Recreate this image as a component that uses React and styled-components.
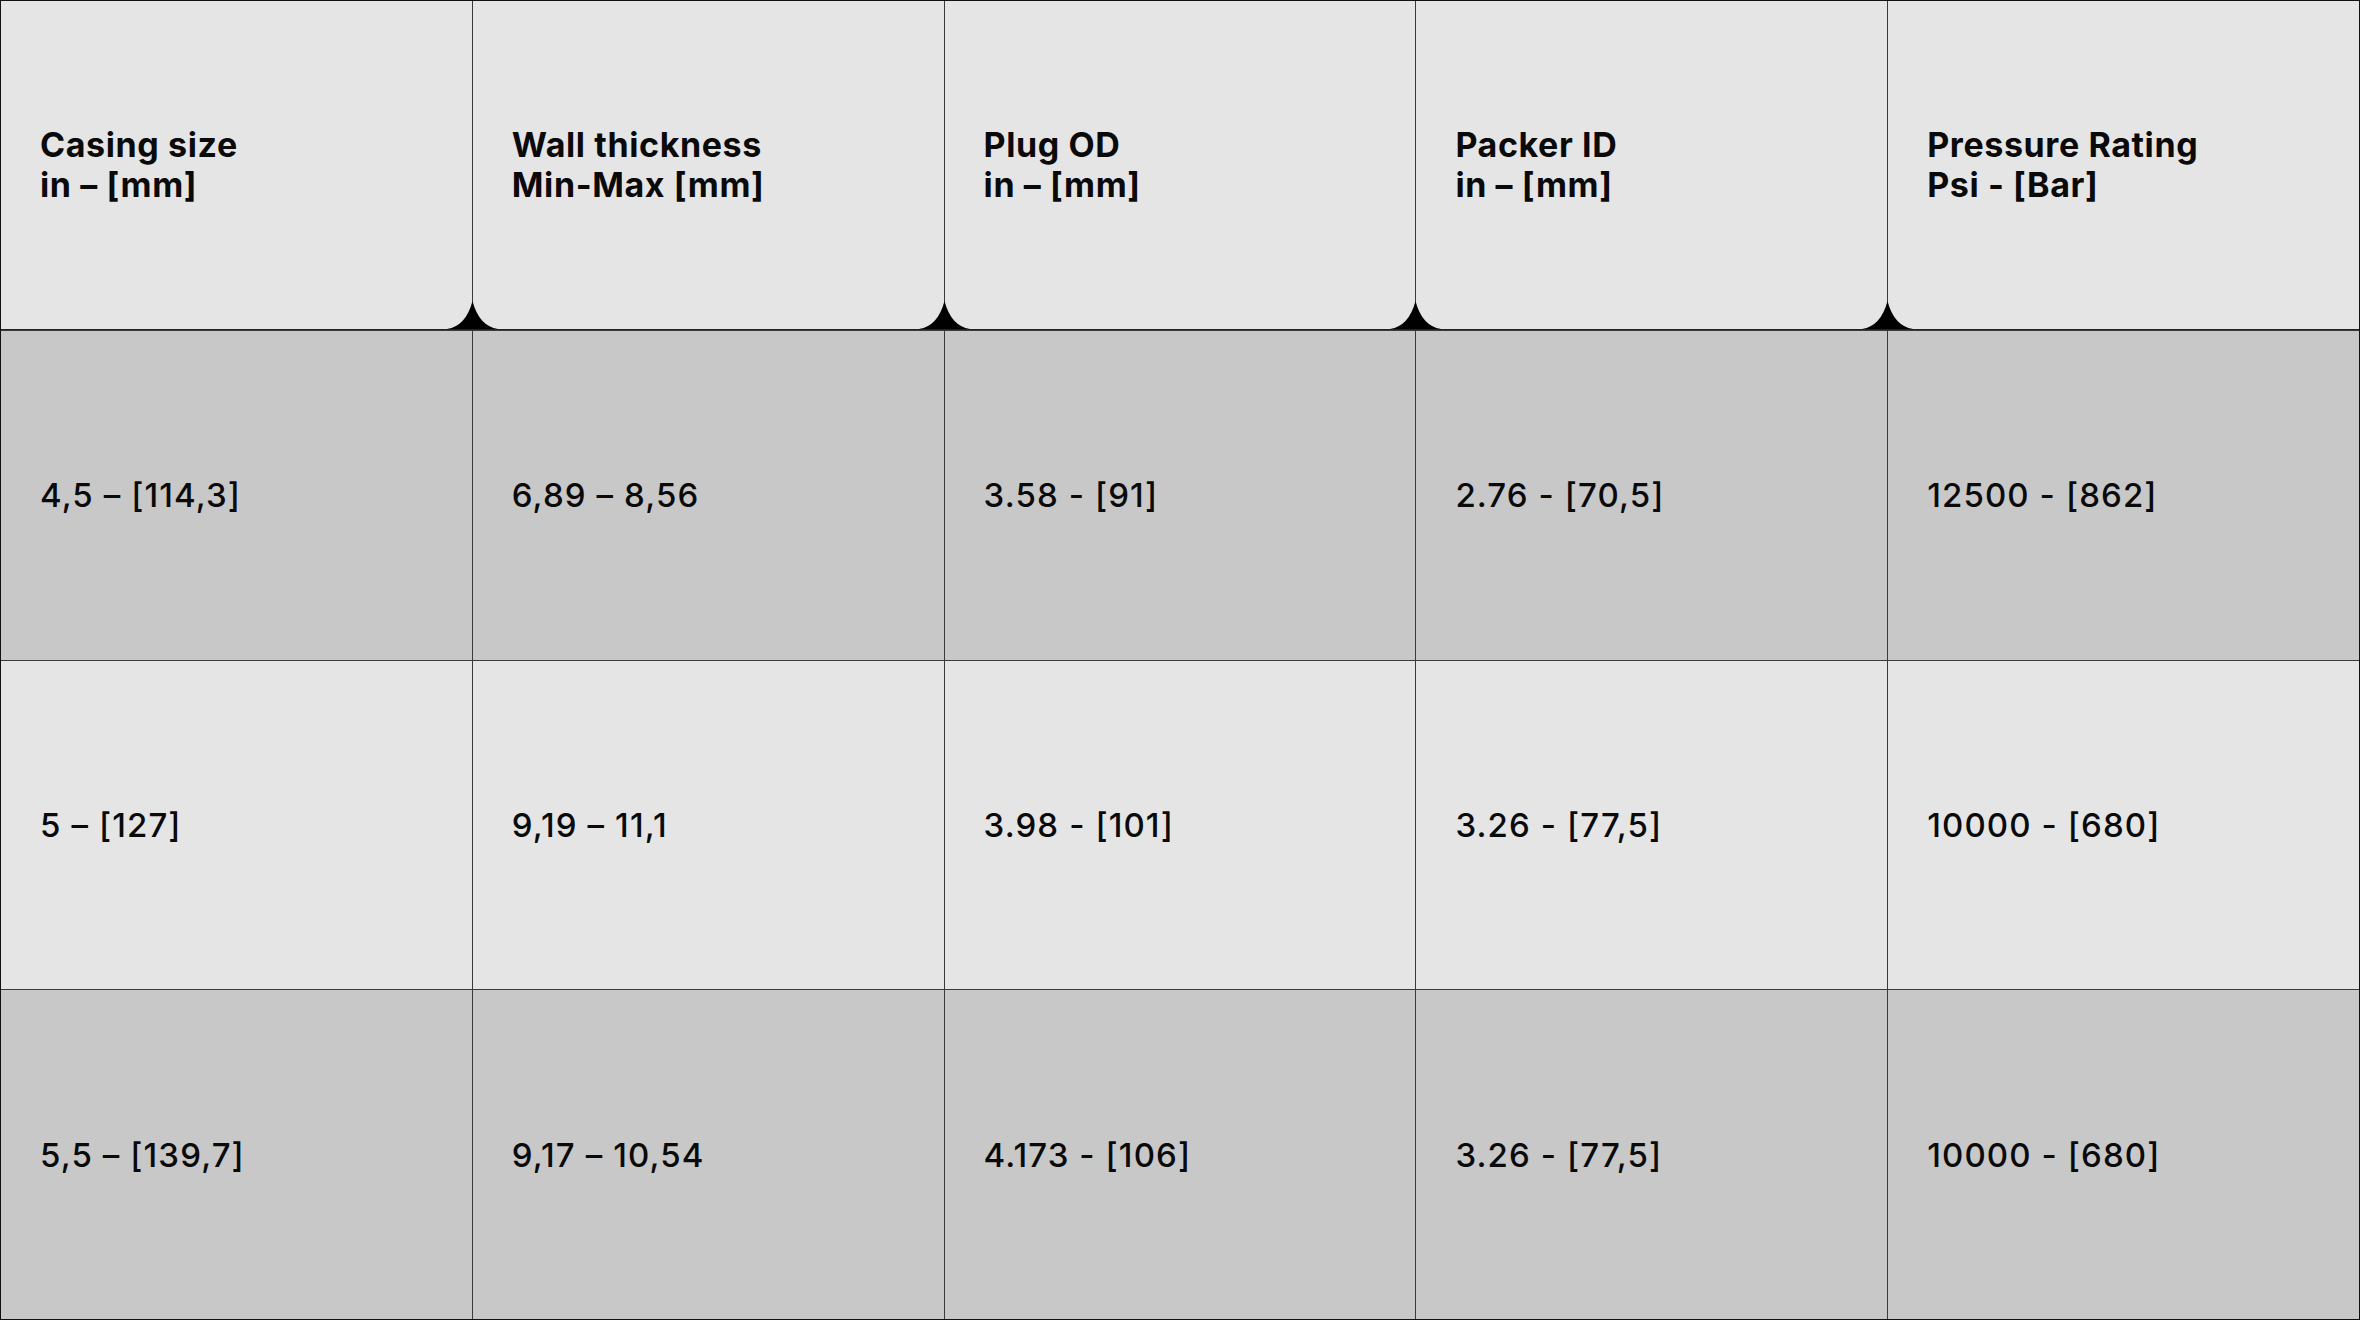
import React from 'react';
import styled, { createGlobalStyle } from 'styled-components';

const GlobalStyle = createGlobalStyle`
  html, body {
    margin: 0;
    padding: 0;
    background: #e5e5e5;
  }
  * {
    box-sizing: border-box;
  }
`;

const columns = [
  ['Casing size', 'in – [mm]'],
  ['Wall thickness', 'Min-Max [mm]'],
  ['Plug OD', 'in – [mm]'],
  ['Packer ID', 'in – [mm]'],
  ['Pressure Rating', 'Psi - [Bar]'],
];

const rows = [
  ['4,5 – [114,3]', '6,89 – 8,56', '3.58 - [91]', '2.76 - [70,5]', '12500 - [862]'],
  ['5 – [127]', '9,19 – 11,1', '3.98 - [101]', '3.26 - [77,5]', '10000 - [680]'],
  ['5,5 – [139,7]', '9,17 – 10,54', '4.173 - [106]', '3.26 - [77,5]', '10000 - [680]'],
];

const Table = styled.div`
  width: 100vw;
  height: 100vh;
  display: grid;
  grid-template-rows: repeat(4, 1fr);
  gap: 1px;
  background: #3a3a3a;
  border: 1px solid #111;
  font-family: Inter, "Liberation Sans", sans-serif;
  color: #0a0a0a;
`;

const Row = styled.div`
  display: grid;
  grid-template-columns: repeat(5, 1fr);
  gap: 1px;
  background: #3a3a3a;
  border-bottom: ${({ $head }) => ($head ? '1px solid #222' : 'none')};
`;

const HeadCell = styled.div`
  position: relative;
  display: flex;
  flex-direction: column;
  justify-content: center;
  padding: 0 0 0 39px;
  background: #e5e5e5;
  font-size: 34px;
  font-weight: 700;
  line-height: 40px;
  letter-spacing: 0.6px;
`;

/* black notch that sits on the header divider, over both neighbouring cells */
const Cusp = styled.svg`
  position: absolute;
  left: -26px;
  bottom: 0;
  width: 51px;
  height: 28px;
  display: block;
`;

const Cell = styled.div`
  display: flex;
  align-items: center;
  padding-left: 39px;
  background: ${({ $dark }) => ($dark ? '#c8c8c8' : '#e5e5e5')};
  font-size: 33px;
  font-weight: 500;
  letter-spacing: 1.1px;
`;

export default function App() {
  return (
    <>
      <GlobalStyle />
      <Table>
        <Row $head>
          {columns.map(([top, unit], i) => (
            <HeadCell key={top}>
              {i > 0 && (
                <Cusp viewBox="0 0 51 28" aria-hidden="true">
                  <path d="M0 28 Q19 25 25.5 0 Q32 25 51 28 Z" fill="#000" />
                </Cusp>
              )}
              <span>{top}</span>
              <span>{unit}</span>
            </HeadCell>
          ))}
        </Row>
        {rows.map((row, r) => (
          <Row key={r}>
            {row.map((val, c) => (
              <Cell key={c} $dark={r % 2 === 0}>{val}</Cell>
            ))}
          </Row>
        ))}
      </Table>
    </>
  );
}
